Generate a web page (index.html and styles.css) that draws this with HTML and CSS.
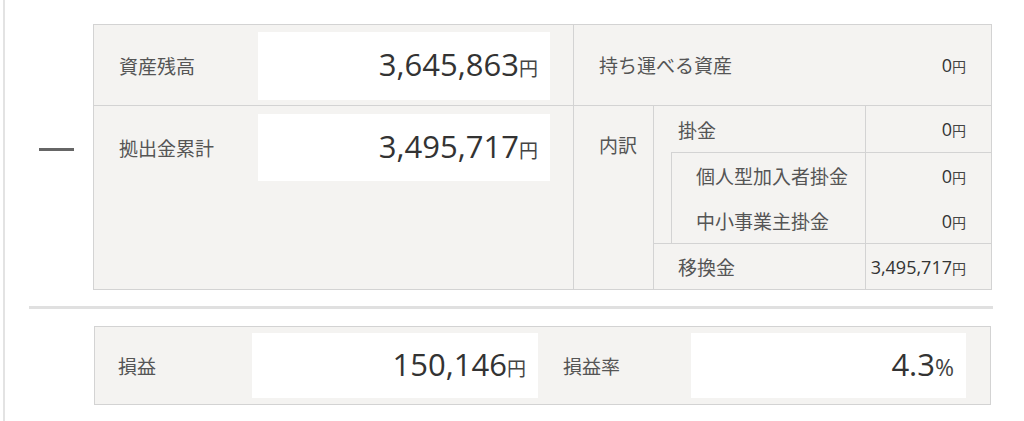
FILE: index.html
```html
<!DOCTYPE html>
<html lang="ja">
<head>
<meta charset="utf-8">
<title>資産残高</title>
<link rel="stylesheet" href="styles.css">
</head>
<body>
<div class="page">
  <div class="top">
    <div class="sign"><span class="minus" aria-label="マイナス"></span></div>
    <div class="box">
      <div class="cell main r1">
        <div class="label">資産残高</div>
        <div class="vbox"><span class="amt"><span class="num">3,645,863</span><span class="unit">円</span></span></div>
      </div>
      <div class="cell side r1">
        <div class="label">持ち運べる資産</div>
        <div class="sval"><span class="snum">0</span><span class="sunit">円</span></div>
      </div>
      <div class="cell main r2">
        <div class="label">拠出金累計</div>
        <div class="vbox h67"><span class="amt"><span class="num">3,495,717</span><span class="unit">円</span></span></div>
      </div>
      <div class="cell breakdown">
        <div class="bd-title">内訳</div>
        <div class="bd">
          <div class="bd-label">掛金</div>
          <div class="bd-val"><span class="sval"><span class="snum">0</span><span class="sunit">円</span></span></div>
          <div class="bd-sub">
            <div class="bd-sublabel">個人型加入者掛金</div>
            <div class="bd-sublabel">中小事業主掛金</div>
          </div>
          <div class="bd-subvals">
            <div class="bd-val"><span class="sval"><span class="snum">0</span><span class="sunit">円</span></span></div>
            <div class="bd-val"><span class="sval"><span class="snum">0</span><span class="sunit">円</span></span></div>
          </div>
          <div class="bd-label line">移換金</div>
          <div class="bd-val line"><span class="sval"><span class="snum">3,495,717</span><span class="sunit">円</span></span></div>
        </div>
      </div>
    </div>
  </div>
  <div class="sep"></div>
  <div class="pl">
    <div class="label">損益</div>
    <div class="vbox h65"><span class="amt"><span class="num">150,146</span><span class="unit">円</span></span></div>
    <div class="label pl-label2">損益率</div>
    <div class="vbox h65"><span class="amt"><span class="num">4.3</span><span class="pct">%</span></span></div>
  </div>
</div>
</body>
</html>
```

FILE: styles.css
```css
html, body {
  margin: 0;
  padding: 0;
  background: #ffffff;
}

body {
  font-family: "Noto Sans CJK JP", "Noto Sans", sans-serif;
  color: #555555;
}

.page {
  margin-left: 3px;
  border-left: 2px solid #e3e3e3;
  min-height: 100vh;
  box-sizing: border-box;
  padding-top: 24px;
}

.top {
  display: flex;
}

.sign {
  width: 88px;
  flex: none;
}

.minus {
  display: block;
  width: 35px;
  height: 3px;
  margin-left: 34px;
  margin-top: 124px;
  background: #666666;
}

.box {
  width: 899px;
  box-sizing: border-box;
  border: 1px solid #d3d3d3;
  background: #f4f3f1;
  display: grid;
  grid-template-columns: 480px 1fr;
}

.cell {
  box-sizing: border-box;
}

.r1 {
  border-bottom: 1px solid #d3d3d3;
}

.main {
  border-right: 1px solid #d3d3d3;
  display: grid;
  grid-template-columns: 139px 292px;
  align-items: center;
  align-content: start;
  padding-left: 25px;
}

.main.r1 {
  padding-top: 7px;
  padding-bottom: 5px;
}

.main.r2 {
  padding-top: 8px;
}

.label {
  font-size: 19px;
  line-height: 28px;
  color: #555555;
  white-space: nowrap;
}

.vbox {
  background: #ffffff;
  height: 68px;
  display: flex;
  justify-content: flex-end;
  align-items: center;
  padding-right: 12px;
  box-sizing: border-box;
  color: #333333;
  white-space: nowrap;
}

.vbox.h67 {
  height: 67px;
}

.vbox.h65 {
  height: 65px;
}

.amt {
  display: block;
  line-height: 40px;
  padding-top: 1px;
}

.num {
  font-family: "Open Sans", sans-serif;
  font-size: 31px;
  color: #333333;
}

.unit {
  font-family: "Noto Sans CJK JP", sans-serif;
  font-size: 19px;
  color: #444444;
}

.pct {
  font-family: "Open Sans", sans-serif;
  font-size: 23px;
  color: #444444;
}

.side {
  display: flex;
  justify-content: space-between;
  align-items: center;
  padding: 0 25px;
}

.sval {
  white-space: nowrap;
  color: #333333;
}

.snum {
  font-family: "Open Sans", sans-serif;
  font-size: 18px;
  color: #333333;
}

.sunit {
  font-family: "Noto Sans CJK JP", sans-serif;
  font-size: 14px;
  color: #444444;
}

.breakdown {
  display: grid;
  grid-template-columns: 80px 1fr;
}

.bd-title {
  border-right: 1px solid #d3d3d3;
  padding: 25px 0 0 25px;
  font-size: 19px;
  line-height: 28px;
  color: #555555;
}

.bd {
  display: grid;
  grid-template-columns: 212px 1fr;
  grid-template-rows: 46px 91px 46px;
}

.bd-label {
  border-right: 1px solid #d3d3d3;
  padding-left: 24px;
  display: flex;
  align-items: center;
  font-size: 19px;
  color: #555555;
  box-sizing: border-box;
}

.bd-val {
  display: flex;
  justify-content: flex-end;
  align-items: center;
  padding-right: 25px;
  box-sizing: border-box;
}

.line {
  border-top: 1px solid #d3d3d3;
}

.bd-sub {
  margin-left: 17px;
  border-left: 1px solid #d3d3d3;
  border-top: 1px solid #d3d3d3;
  border-right: 1px solid #d3d3d3;
  display: grid;
  grid-template-rows: 45px 45px;
}

.bd-sublabel {
  padding-left: 24px;
  display: flex;
  align-items: center;
  font-size: 19px;
  color: #555555;
  white-space: nowrap;
}

.bd-subvals {
  border-top: 1px solid #d3d3d3;
  display: grid;
  grid-template-rows: 45px 45px;
}

.sep {
  margin: 16px 0 17px 24px;
  width: 964px;
  height: 3px;
  background: #e0e0e0;
}

.pl {
  margin-left: 89px;
  width: 897px;
  box-sizing: border-box;
  border: 1px solid #d3d3d3;
  background: #f4f3f1;
  display: grid;
  grid-template-columns: 134px 286px 153px 275px;
  padding: 6px 24px 6px 23px;
  align-items: center;
}

.pl-label2 {
  padding-left: 25px;
}
```
